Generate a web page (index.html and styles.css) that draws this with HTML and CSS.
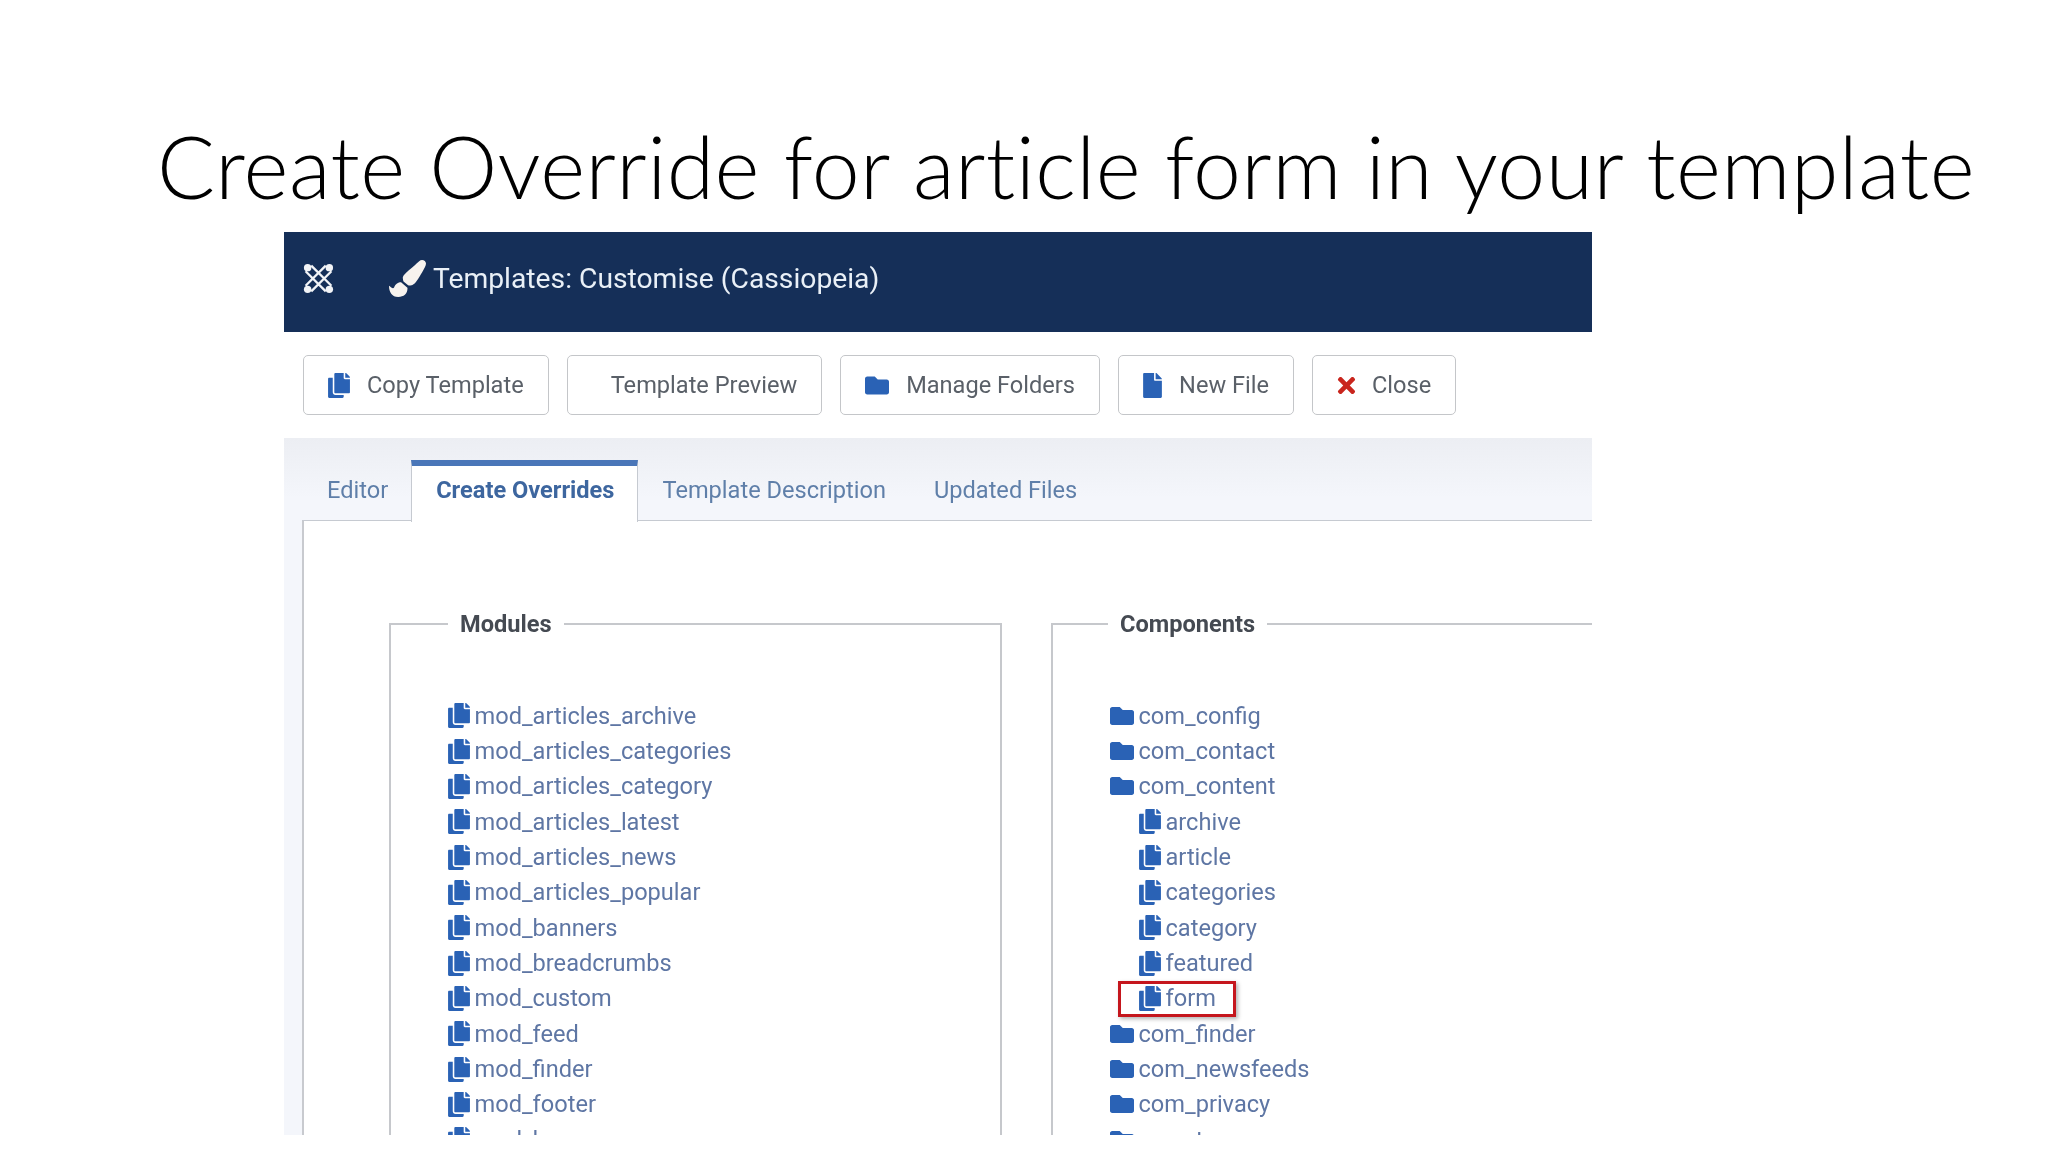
FILE: index.html
```html
<!DOCTYPE html>
<html lang="en">
  <head>
    <meta charset="utf-8" />
    <title>Create Override for article form in your template</title>
    <link rel="stylesheet" href="styles.css">
  </head>
  <body>
    <svg class="icon-defs">
      <symbol id="i-copy" viewBox="0 0 448 512"><path d="M320 448v40c0 13.255-10.745 24-24 24H24c-13.255 0-24-10.745-24-24V120c0-13.255 10.745-24 24-24h72v296c0 30.879 25.121 56 56 56h168zm0-344V0H152c-13.255 0-24 10.745-24 24v368c0 13.255 10.745 24 24 24h272c13.255 0 24-10.745 24-24V128H344c-13.2 0-24-10.8-24-24zm120.971-31.029L375.029 7.029A24 24 0 0 0 358.059 0H352v96h96v-6.059a24 24 0 0 0-7.029-16.97z"/></symbol>
      <symbol id="i-folder" viewBox="0 0 512 512"><path d="M464 128H272l-64-64H48C21.49 64 0 85.49 0 112v288c0 26.51 21.49 48 48 48h416c26.51 0 48-21.49 48-48V176c0-26.51-21.49-48-48-48z"/></symbol>
      <symbol id="i-file" viewBox="0 0 384 512"><path d="M224 136V0H24C10.7 0 0 10.7 0 24v464c0 13.3 10.7 24 24 24h336c13.3 0 24-10.7 24-24V160H248c-13.2 0-24-10.8-24-24zm160-14.1v6.1H256V0h6.1c6.4 0 12.5 2.5 17 7l97.9 98c4.5 4.5 7 10.6 7 16.9z"/></symbol>
      <symbol id="i-times" viewBox="0 0 352 512"><path d="M242.72 256l100.07-100.07c12.28-12.28 12.28-32.19 0-44.48l-22.24-22.24c-12.28-12.28-32.19-12.28-44.48 0L176 189.28 75.93 89.21c-12.28-12.28-32.19-12.28-44.48 0L9.21 111.45c-12.28 12.28-12.28 32.19 0 44.48L109.28 256 9.21 356.07c-12.28 12.28-12.28 32.19 0 44.48l22.24 22.24c12.28 12.28 32.2 12.28 44.48 0L176 322.72l100.07 100.07c12.28 12.28 32.2 12.28 44.48 0l22.24-22.24c12.28-12.28 12.28-32.19 0-44.48L242.72 256z"/></symbol>
      <symbol id="i-brush" viewBox="0 0 512 512"><path d="M167.02 309.34c-40.12 2.58-76.53 17.86-97.19 72.3-2.35 6.21-8 9.98-14.59 9.98-11.11 0-45.46-27.67-55.25-34.35C0 439.62 37.93 512 128 512c75.86 0 128-43.77 128-120.19 0-3.11-.65-6.08-.97-9.13l-88.01-73.34zM457.89 0c-15.16 0-29.37 6.71-40.21 16.45C213.27 199.05 192 203.34 192 257.09c0 13.7 3.25 26.76 8.73 38.7l63.82 53.18c7.21 1.8 14.64 3.03 22.39 3.03 62.11 0 98.11-45.47 211.16-256.46 7.38-14.35 13.9-29.85 13.9-45.99C512 20.64 486 0 457.89 0z"/></symbol>
    </svg>

    <h1 class="slide-title">Create Override for article form in your template</h1>

    <div class="shot">
      <header class="shot-header">
        <svg class="logo" viewBox="0 0 30 30">
          <path d="M2.5 8 22 27.5M8 2.5 27.5 22M2.5 22 22 2.5M8 27.5 27.5 8" />
          <circle cx="4.5" cy="4.5" r="3.6" /><circle cx="25.5" cy="4.5" r="3.6" />
          <circle cx="4.5" cy="25.5" r="3.6" /><circle cx="25.5" cy="25.5" r="3.6" />
        </svg>
        <svg class="brush"><use href="#i-brush" /></svg>
        <span class="shot-title">Templates: Customise (Cassiopeia)</span>
      </header>

      <div class="toolbar">
        <button class="btn"><svg class="btn-icon"><use href="#i-copy" /></svg>Copy Template</button>
        <button class="btn btn-noicon">Template Preview</button>
        <button class="btn"><svg class="btn-icon btn-icon-folder"><use href="#i-folder" /></svg>Manage Folders</button>
        <button class="btn"><svg class="btn-icon btn-icon-file"><use href="#i-file" /></svg>New File</button>
        <button class="btn"><svg class="btn-icon btn-icon-close"><use href="#i-times" /></svg>Close</button>
      </div>

      <div class="tab-area">
        <nav class="tabs">
          <a class="tab">Editor</a>
          <a class="tab tab-active">Create Overrides</a>
          <a class="tab">Template Description</a>
          <a class="tab">Updated Files</a>
        </nav>

        <div class="tab-content">
          <fieldset class="group group-modules">
            <legend>Modules</legend>
            <ul class="tree">
              <li><svg class="i-doc"><use href="#i-copy" /></svg>mod_articles_archive</li>
              <li><svg class="i-doc"><use href="#i-copy" /></svg>mod_articles_categories</li>
              <li><svg class="i-doc"><use href="#i-copy" /></svg>mod_articles_category</li>
              <li><svg class="i-doc"><use href="#i-copy" /></svg>mod_articles_latest</li>
              <li><svg class="i-doc"><use href="#i-copy" /></svg>mod_articles_news</li>
              <li><svg class="i-doc"><use href="#i-copy" /></svg>mod_articles_popular</li>
              <li><svg class="i-doc"><use href="#i-copy" /></svg>mod_banners</li>
              <li><svg class="i-doc"><use href="#i-copy" /></svg>mod_breadcrumbs</li>
              <li><svg class="i-doc"><use href="#i-copy" /></svg>mod_custom</li>
              <li><svg class="i-doc"><use href="#i-copy" /></svg>mod_feed</li>
              <li><svg class="i-doc"><use href="#i-copy" /></svg>mod_finder</li>
              <li><svg class="i-doc"><use href="#i-copy" /></svg>mod_footer</li>
              <li><svg class="i-doc"><use href="#i-copy" /></svg>mod_languages</li>
            </ul>
          </fieldset>

          <fieldset class="group group-components">
            <legend>Components</legend>
            <ul class="tree">
              <li><svg class="i-dir"><use href="#i-folder" /></svg>com_config</li>
              <li><svg class="i-dir"><use href="#i-folder" /></svg>com_contact</li>
              <li><svg class="i-dir"><use href="#i-folder" /></svg>com_content</li>
              <li class="sub"><svg class="i-doc"><use href="#i-copy" /></svg>archive</li>
              <li class="sub"><svg class="i-doc"><use href="#i-copy" /></svg>article</li>
              <li class="sub"><svg class="i-doc"><use href="#i-copy" /></svg>categories</li>
              <li class="sub"><svg class="i-doc"><use href="#i-copy" /></svg>category</li>
              <li class="sub"><svg class="i-doc"><use href="#i-copy" /></svg>featured</li>
              <li class="sub marked"><svg class="i-doc"><use href="#i-copy" /></svg>form</li>
              <li><svg class="i-dir"><use href="#i-folder" /></svg>com_finder</li>
              <li><svg class="i-dir"><use href="#i-folder" /></svg>com_newsfeeds</li>
              <li><svg class="i-dir"><use href="#i-folder" /></svg>com_privacy</li>
              <li><svg class="i-dir"><use href="#i-folder" /></svg>com_tags</li>
            </ul>
          </fieldset>
        </div>
      </div>
    </div>
  </body>
</html>
```

FILE: styles.css
```css
body {
  margin: 0;
  height: 1152px;
  overflow: hidden;
  background: #ffffff;
}

.icon-defs {
  display: none;
}

.slide-title {
  margin: 0;
  height: 232px;
  padding: 116px 0 0 157px;
  box-sizing: border-box;
  font: 300 86px/100px Lato, sans-serif;
  font-variant-ligatures: none;
  letter-spacing: 0.45px;
  color: #000000;
  white-space: nowrap;
}

.shot {
  width: 1308px;
  height: 903px;
  margin-left: 284px;
  overflow: hidden;
  font-family: Roboto, sans-serif;
  filter: blur(0.6px);
}

.shot-header {
  display: flex;
  align-items: center;
  height: 100px;
  padding: 0 0 8px 19px;
  box-sizing: border-box;
  background: #152f58;
}

.logo {
  width: 31px;
  height: 31px;
  fill: #f2f4f7;
  stroke: #f2f4f7;
  stroke-width: 2.2;
}

.logo circle {
  stroke: none;
}

.logo path {
  fill: none;
}

.brush {
  width: 37px;
  height: 37px;
  margin: 0 7px 0 55px;
  fill: #f7f3ee;
}

.shot-title {
  font-size: 28.25px;
  color: #e9f0f7;
}

.toolbar {
  display: flex;
  gap: 18px;
  height: 106px;
  padding: 23px 0 0 19px;
  box-sizing: border-box;
}

.btn {
  display: flex;
  align-items: center;
  height: 60px;
  padding: 0 24px;
  border: 1.5px solid #c4c6c9;
  border-radius: 5px;
  background: #ffffff;
  font: 23.6px Roboto, sans-serif;
  color: #5a6068;
}

.btn-noicon {
  padding-left: 43px;
}

.btn-icon {
  width: 22px;
  height: 25px;
  margin-right: 17px;
  fill: #2a62b5;
}

.btn-icon-folder {
  width: 24px;
}

.btn-icon-file {
  width: 19px;
}

.btn-icon-close {
  width: 19px;
  margin-right: 16px;
  fill: #c9251d;
}

.tab-area {
  background: linear-gradient(#eceef3, #f4f6fb 60px);
  height: 697px;
}

.tabs {
  display: flex;
  align-items: flex-end;
  height: 83px;
  box-sizing: border-box;
  margin-left: 18px;
  padding-left: 1px;
  border-bottom: 1.5px solid #c6cad1;
}

.tab {
  height: 62px;
  margin-bottom: -1.5px;
  padding: 0 24px;
  box-sizing: border-box;
  font-size: 23.6px;
  line-height: 61px;
  color: #5f7fa9;
}

.tab-active {
  margin-left: -1.5px;
  padding: 0 23px 0 24.5px;
  border: 1.5px solid #c6cad1;
  border-top: 6px solid #4a76b8;
  border-bottom: 0;
  background: #ffffff;
  font-weight: 700;
  line-height: 49px;
  color: #3d669f;
}

.tab-content {
  display: flex;
  gap: 49px;
  height: 614px;
  margin-left: 18px;
  padding: 88px 0 0 85px;
  box-sizing: border-box;
  border-left: 2px solid #c8cacf;
  background: #ffffff;
}

.group {
  flex: none;
  box-sizing: border-box;
  margin: 0;
  padding: 59px 0 0;
  border: 2px solid #c6c8cc;
  border-bottom: 0;
}

.group-modules {
  width: 613px;
}

.group-components {
  width: 700px;
}

.group legend {
  margin-left: 57px;
  padding: 0 12px;
  font-size: 23.6px;
  font-weight: 700;
  line-height: 30px;
  color: #454a52;
}

.group-components legend {
  margin-left: 55px;
}

.tree {
  margin: 0;
  padding: 0 0 0 56.5px;
  list-style: none;
}

.tree li {
  display: flex;
  align-items: center;
  height: 35.35px;
  font-size: 23.6px;
  color: #5e76a4;
}

.tree .sub {
  padding-left: 29px;
}

.i-doc {
  width: 22px;
  height: 25px;
  margin-right: 5px;
  fill: #2a62b5;
}

.i-dir {
  width: 24px;
  height: 24px;
  margin-right: 5px;
  fill: #2a62b5;
}

.marked {
  position: relative;
}

.marked::after {
  content: "";
  position: absolute;
  top: 0;
  left: 8px;
  width: 112px;
  height: 30px;
  border: 3px solid #c5161d;
  box-shadow: 2px 2px 4px rgba(0, 0, 0, 0.3);
}
```
